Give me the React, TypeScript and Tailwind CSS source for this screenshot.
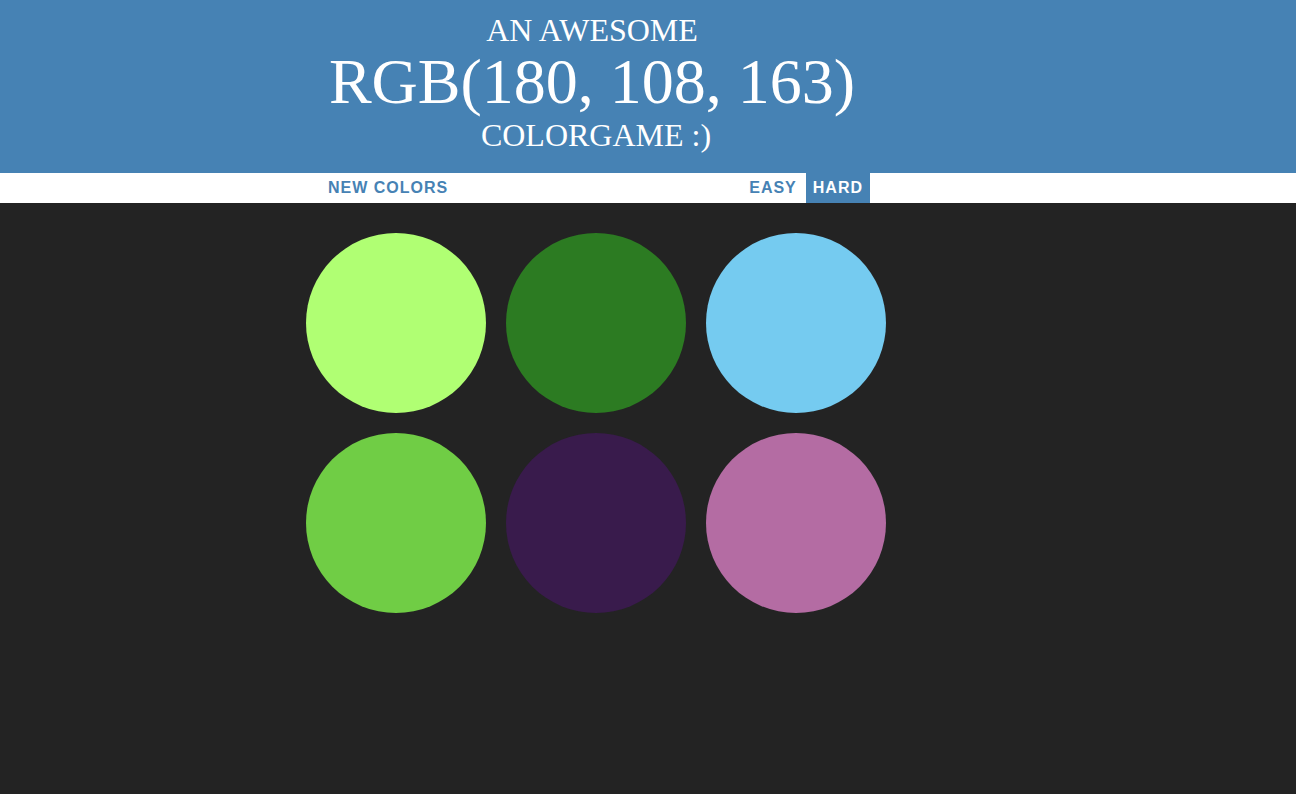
const colors = [
  "#b0ff73",
  "#2c7b22",
  "#75cbf0",
  "#70cd45",
  "#391b4c",
  "#b46ca3",
];

export default function App() {
  return (
    <div className="min-h-[794px] bg-[#232323]">
      <header className="bg-[#4682b4] pt-[14px] pb-[20px] text-white uppercase font-['Liberation_Serif',serif]">
        <h1 className="ml-[292px] w-[600px] text-center font-normal">
          <span className="block text-[32px] leading-[32px]">An Awesome</span>
          <span className="block text-[64px] leading-[71px]">RGB(180, 108, 163)</span>
          <span className="block pl-[8px] text-[32px] leading-[36px]">Colorgame :)</span>
        </h1>
      </header>

      <nav className="bg-white h-[30px]">
        <div className="ml-[296px] w-[600px] h-full pl-[25px] pr-[26px] flex items-stretch font-['Liberation_Sans',sans-serif] font-bold text-[16px] tracking-[1px] uppercase text-[#4682b4]">
          <button className="px-[7px] uppercase">New Colors</button>
          <div className="flex-1" />
          <button className="px-[7px] uppercase">Easy</button>
          <button className="ml-[2px] px-[7px] uppercase bg-[#4682b4] text-white">Hard</button>
        </div>
      </nav>

      <div className="ml-[296px] w-[600px] pt-[20px] flex flex-wrap">
        {colors.map((c) => (
          <div
            key={c}
            className="m-[10px] w-[180px] h-[180px] rounded-full"
            style={{ backgroundColor: c }}
          />
        ))}
      </div>
    </div>
  );
}
